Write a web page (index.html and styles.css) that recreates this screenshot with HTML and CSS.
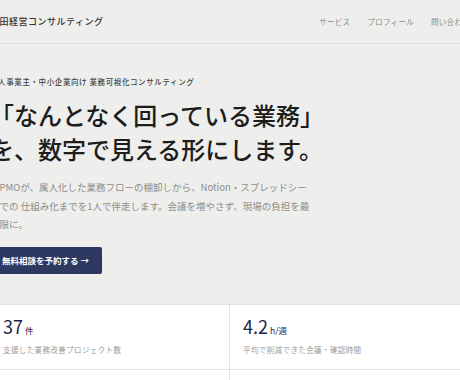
FILE: index.html
```html
<!DOCTYPE html>
<html lang="ja">
<head>
  <meta charset="UTF-8">
  <meta name="viewport" content="width=device-width, initial-scale=1.0">
  <title>山田経営コンサルティング</title>
  <link rel="stylesheet" href="styles.css">
</head>
<body>
  <header class="header">
    <div class="wrap header-inner">
      <div class="brand">山田経営コンサルティング</div>
      <nav class="nav">
        <a href="#service">サービス</a>
        <a href="#profile">プロフィール</a>
        <a href="#contact">問い合わせ</a>
      </nav>
    </div>
  </header>

  <section class="hero">
    <div class="wrap">
      <p class="eyebrow">個人事業主・中小企業向け 業務可視化コンサルティング</p>
      <h1 class="hero-title">「なんとなく回っている業務」<br>を、数字で見える形にします。</h1>
      <p class="hero-text">元PMOが、属人化した業務フローの棚卸しから、Notion・スプレッドシートでの 仕組み化までを1人で伴走します。会議を増やさず、現場の負担を最小限に。</p>
      <a class="btn" href="#contact">無料相談を予約する →</a>
    </div>
  </section>

  <!-- 実績 -->
  <section class="stats">
    <div class="wrap stats-grid">
      <div class="stat">
        <div class="stat-num">37<span class="unit">件</span></div>
        <div class="stat-label">支援した業務改善プロジェクト数</div>
      </div>
      <div class="stat">
        <div class="stat-num">4.2<span class="unit">h/週</span></div>
        <div class="stat-label">平均で削減できた会議・確認時間</div>
      </div>
      <div class="stat">
        <div class="stat-num">92<span class="unit">%</span></div>
        <div class="stat-label">継続契約率</div>
      </div>
      <div class="stat">
        <div class="stat-num">3<span class="unit">ヶ月</span></div>
        <div class="stat-label">仕組み化までの平均期間</div>
      </div>
    </div>
  </section>
</body>
</html>
```

FILE: styles.css
```css
html, body {
  margin: 0;
  overflow: hidden;
}

body {
  font-family: "Noto Sans CJK JP", "Noto Sans", sans-serif;
  background-color: #eeefec;
  color: #222;
}

.header, .hero, .stats {
  display: flex;
  justify-content: center;
}

.wrap {
  flex: none;
  width: 480px;
  box-sizing: border-box;
}

/* Header */
.header {
  border-bottom: 1px solid #dfe0dd;
}

.header-inner {
  display: flex;
  justify-content: space-between;
  align-items: center;
  height: 43px;
}

.brand {
  font-size: 9px;
  font-weight: 500;
  letter-spacing: 0.5px;
  color: #333;
}

.nav {
  display: flex;
  gap: 17px;
}

.nav a {
  font-size: 7.5px;
  letter-spacing: 0.3px;
  color: #8a8a88;
  text-decoration: none;
}

/* Hero */
.hero .wrap {
  padding: 32px 0 30px;
}

.eyebrow {
  margin: 0 0 10px;
  font-size: 7.5px;
  line-height: 12px;
  letter-spacing: 0.6px;
  font-weight: 500;
  color: #444;
}

.hero-title {
  margin: 0 0 12px;
  font-size: 24px;
  line-height: 34px;
  font-weight: 500;
  color: #1d1d1d;
}

.hero-text {
  margin: 0 0 11px;
  max-width: 322px;
  font-size: 9.5px;
  line-height: 18.5px;
  color: #8c8c8a;
}

.btn {
  display: inline-block;
  background-color: #2d3961;
  color: #fff;
  font-size: 8.5px;
  font-weight: 700;
  line-height: 27px;
  padding: 0 13px 0 12px;
  border-radius: 2px;
  text-decoration: none;
}

/* Stats */
.stats {
  background-color: #fff;
  border-top: 1px solid #e2e3e0;
}

.stats-grid {
  display: grid;
  grid-template-columns: 1fr 1fr;
}

.stat {
  padding: 10px 13px 13px;
  border-bottom: 1px solid #e2e3e0;
}

.stat:nth-child(odd) {
  border-right: 1px solid #e2e3e0;
}

.stat-num {
  font-size: 18px;
  line-height: 22px;
  color: #1c2448;
}

.unit {
  font-size: 8.5px;
  margin-left: 2px;
}

.stat-label {
  margin-top: 3px;
  font-size: 7.5px;
  line-height: 12px;
  letter-spacing: 0.4px;
  color: #999;
}
```
